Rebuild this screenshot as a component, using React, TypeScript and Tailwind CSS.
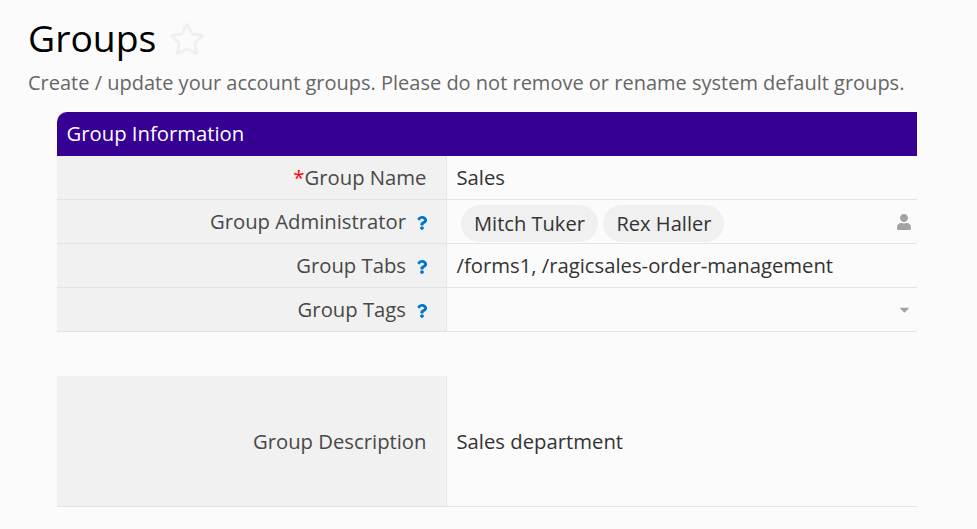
import { FaQuestion, FaUser, FaRegStar, FaCaretDown } from "react-icons/fa";

function Help() {
  return <FaQuestion className="ml-[9px] mt-[3px] h-[14px] w-[14px] text-[#0275d0]" />;
}

function Row({ label, children, help, required, h = "h-[44px]" }: { label: string; children?: React.ReactNode; help?: boolean; required?: boolean; h?: string }) {
  return (
    <div className={`flex ${h} border-b border-[#e4e4e4] text-[20.27px]`}>
      <div className={`flex w-[390px] shrink-0 items-center justify-end border-r border-[#e8e8e8] bg-[#f1f1f1] ${help ? "pr-[17px]" : "pr-[19.5px]"} text-[#484848]`}>
        {required && <span className="text-[#ff0000]">*</span>}
        <span>{label}</span>
        {help && <Help />}
      </div>
      <div className="flex min-w-0 flex-1 items-center justify-between pl-[9.5px] pr-[5px] text-[#333333]">{children}</div>
    </div>
  );
}

export default function App() {
  return (
    <div className="h-[529px] w-[977px] overflow-hidden bg-[#fbfbfb] pl-[28px] pt-[14px] font-['Open_Sans',sans-serif] text-[20px]">
      <div className="flex h-[48px] items-center">
        <h1 className="text-[37.33px] leading-[48px] text-black">Groups</h1>
        <FaRegStar className="ml-[13px] mt-[2px] h-[36px] w-[36px] text-[#f0f0f0]" />
      </div>
      <p className="mt-[7px] h-[27px] text-[20px] leading-[27px] text-[#666666]">Create / update your account groups. Please do not remove or rename system default groups.</p>
      <div className="ml-[29px] mt-[16px] w-[860px]">
        <div className="flex h-[44px] items-center rounded-tl-[10px] bg-[#360094] pb-[2px] pl-[9.5px] text-[20.27px] text-white">Group Information</div>
        <Row label="Group Name" required>Sales</Row>
        <Row label="Group Administrator" help>
          <div className="mt-[4px] flex gap-[5px] pl-[4.5px] text-[20.1px]">
            <span className="flex h-[37px] items-center rounded-[19px] bg-[#f0f0f0] pl-[13px] pr-[13.5px] pt-[2px]">Mitch Tuker</span>
            <span className="flex h-[37px] items-center rounded-[19px] bg-[#f0f0f0] px-[13px] pt-[2px]">Rex Haller</span>
          </div>
          <FaUser className="h-[16px] w-[16px] text-[#a3a3a3]" />
        </Row>
        <Row label="Group Tabs" help>/forms1, /ragicsales-order-management</Row>
        <Row label="Group Tags" help>
          <span />
          <FaCaretDown className="h-[15px] w-[15px] text-[#a3a3a3]" />
        </Row>
        <div className="h-[44px]" />
        <Row label="Group Description" h="h-[131px]">Sales department</Row>
      </div>
    </div>
  );
}
